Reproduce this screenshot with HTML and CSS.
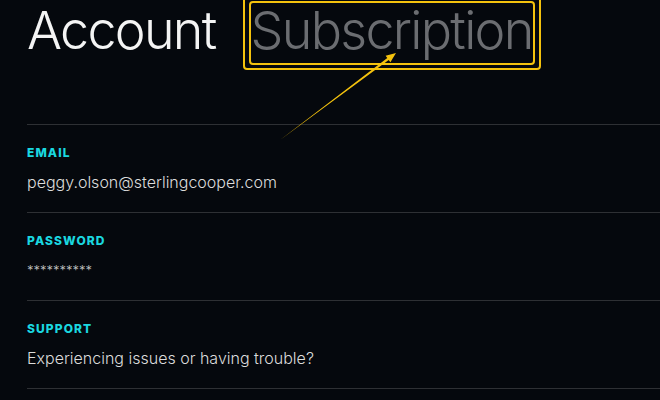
FILE: index.html
```html
<!DOCTYPE html>
<html lang="en">
<head>
    <meta charset="UTF-8">
    <meta name="viewport" content="width=device-width, initial-scale=1.0">
    <title>Account</title>
    <link rel="stylesheet" href="styles.css">
</head>
<body>
    <div class="page">
        <header class="tabs">
            <h1 class="tab tab-active">Account</h1>
            <div class="highlight-outer">
                <div class="highlight-inner">
                    <h1 class="tab">Subscription</h1>
                </div>
            </div>
        </header>

        <section class="field">
            <div class="field-label">Email</div>
            <div class="field-value">peggy.olson@sterlingcooper.com</div>
        </section>

        <section class="field">
            <div class="field-label">Password</div>
            <div class="field-value field-secret">**********</div>
        </section>

        <section class="field">
            <div class="field-label">Support</div>
            <div class="field-value">Experiencing issues or having trouble?</div>
        </section>

        <div class="field-end"></div>

        <!-- annotation arrow pointing at the Subscription tab -->
        <svg class="arrow" width="660" height="400" viewBox="0 0 660 400">
            <polygon points="396,53 390.4,62.2 388.7,60 280,140 387.3,58 385.6,55.8" fill="#f4c20d"/>
        </svg>
    </div>
</body>
</html>
```

FILE: styles.css
```css
:root {
    --bg-color: #05080d;
    --line-color: #2e3034;
    --accent-color: #1ad8e0;
    --highlight-color: #f4c20d;
    --text-color: #dcdcdc;
    --muted-color: #6b6d71;
}

body {
    margin: 0;
    background-color: var(--bg-color);
    font-family: 'Inter', 'Helvetica Neue', sans-serif;
    overflow: hidden;
}

.page {
    position: relative;
    height: 400px;
    padding-left: 27px;
}

.tabs {
    display: flex;
    align-items: flex-start;
    gap: 27px;
    height: 124px;
}

.tab {
    margin: 0;
    font-size: 52px;
    font-weight: 300;
    line-height: 56px;
    letter-spacing: -1.7px;
    color: var(--muted-color);
}

.tab-active {
    color: #f4f4f4;
    padding-top: 3px;
}

.highlight-outer {
    margin-top: -5px;
    padding: 4px 4px 3px 4px;
    border: 2px solid var(--highlight-color);
    border-radius: 4px;
}

.highlight-inner {
    padding: 0 0 4px 0;
    border: 2px solid var(--highlight-color);
    border-radius: 4px;
}

.field {
    height: 87px;
    border-top: 1px solid var(--line-color);
}

.field-end {
    border-top: 1px solid var(--line-color);
}

.field-label {
    margin-top: 22px;
    font-size: 12px;
    font-weight: 800;
    line-height: 12px;
    letter-spacing: 1.1px;
    text-transform: uppercase;
    color: var(--accent-color);
}

.field-value {
    margin-top: 13px;
    font-size: 16px;
    font-weight: 300;
    line-height: 20px;
    color: var(--text-color);
}

.field-secret {
    font-size: 13px;
    letter-spacing: 0;
    color: #c8c8c8;
}

.arrow {
    position: absolute;
    top: 0;
    left: 0;
    pointer-events: none;
}
```
